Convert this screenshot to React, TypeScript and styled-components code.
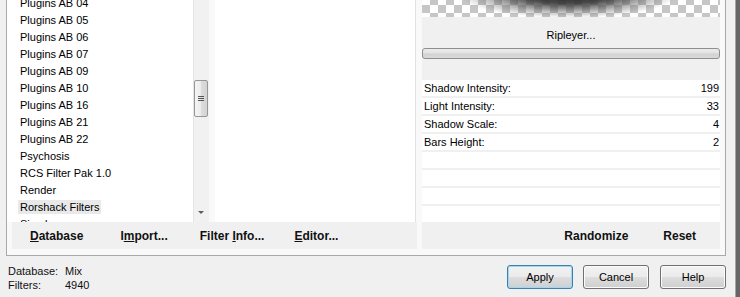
import React from "react";
import styled, { createGlobalStyle } from "styled-components";

const Global = createGlobalStyle`
  html, body { margin: 0; padding: 0; background: #f0f0f0; }
  body {
    font-family: "Liberation Sans", Arial, sans-serif;
    font-size: 11px;
    color: #000;
    overflow: hidden;
  }
`;

const Screen = styled.div`
  display: flex;
  width: 740px;
  height: 297px;
  overflow: hidden;
`;

const Main = styled.div`
  width: 735px;
  display: flex;
  flex-direction: column;
`;

const Edge = styled.div`
  width: 5px;
  box-sizing: border-box;
  background: #666666;
  border-left: 1px solid #a4a4a4;
`;

const Frame = styled.div`
  margin-left: 6px;
  width: 720px;
  height: 256px;
  box-sizing: border-box;
  border: 1px solid #a9a9a9;
  border-top: none;
  background: #f9f9f9;
  display: flex;
  gap: 5px;
`;

const LeftCol = styled.div`
  width: 410px;
  display: flex;
  flex-direction: column;
`;

const TopRow = styled.div`
  height: 222px;
  display: flex;
  gap: 6px;
`;

const List = styled.div`
  width: 202px;
  display: flex;
  background: #fff;
`;

const ListItems = styled.div`
  flex: 1;
  overflow: hidden;
`;

const ListScroll = styled.div`
  margin-top: -5px;
`;

const Item = styled.div`
  height: 17px;
  line-height: 17px;
  padding-left: 11px;
  white-space: nowrap;
`;

const ItemText = styled.span<{ $selected?: boolean }>`
  display: inline-block;
  line-height: 14px;
  padding: 0 2px;
  background: ${(p) => (p.$selected ? "#e9e9e9" : "transparent")};
`;

const Scrollbar = styled.div`
  width: 16px;
  position: relative;
  background: #f1f1f1;
  border-left: 1px solid #e4e4e4;
  box-sizing: border-box;
`;

const Thumb = styled.div`
  position: absolute;
  left: 0;
  width: 14px;
  top: 80px;
  height: 37px;
  box-sizing: border-box;
  border: 1px solid #979797;
  border-radius: 2px;
  background: linear-gradient(90deg, #f4f4f4 0%, #ececec 50%, #dcdcdc 51%, #d4d4d4 100%);
  display: flex;
  align-items: center;
  justify-content: center;
`;

const Arrow = styled.div`
  position: absolute;
  left: 4px;
  top: 211px;
  width: 0;
  height: 0;
  border-left: 3px solid transparent;
  border-right: 3px solid transparent;
  border-top: 3px solid #5c5c5c;
`;

const Middle = styled.div`
  flex: 1;
  margin-right: 1px;
  background: #fff;
  border-right: 1px solid #e2e2e2;
`;

const Bar = styled.div<{ $align: "start" | "end" }>`
  height: 27px;
  background: #f0f0f0;
  display: flex;
  align-items: center;
  justify-content: ${(p) => (p.$align === "end" ? "flex-end" : "flex-start")};
  gap: ${(p) => (p.$align === "end" ? "35px" : "0")};
  padding: ${(p) => (p.$align === "end" ? "0 24px 0 0" : "0 0 0 18px")};
  margin-left: ${(p) => (p.$align === "end" ? "0" : "5px")};
`;

const BarButton = styled.span<{ $gap?: number }>`
  font-size: 12px;
  font-weight: bold;
  color: #111;
  white-space: nowrap;
  margin-left: ${(p) => p.$gap ?? 0}px;
`;

const RightCol = styled.div`
  width: 298px;
  display: flex;
  flex-direction: column;
`;

const Preview = styled.div`
  height: 17px;
  background-color: #fff;
  background-image:
    radial-gradient(ellipse 110px 24px at 146px -6px, rgba(35, 35, 35, 1) 0%, rgba(55, 55, 55, 0.9) 40%, rgba(110, 110, 110, 0.45) 75%, rgba(150, 150, 150, 0) 100%),
    linear-gradient(45deg, #c6c6c6 25%, transparent 25%, transparent 75%, #c6c6c6 75%),
    linear-gradient(45deg, #c6c6c6 25%, transparent 25%, transparent 75%, #c6c6c6 75%);
  background-size: 100% 100%, 16px 16px, 16px 16px;
  background-position: 0 0, 0 -3px, 8px 5px;
  background-repeat: no-repeat, repeat, repeat;
`;

const Info = styled.div`
  height: 63px;
  background: #f0f0f0;
  display: flex;
  flex-direction: column;
  align-items: center;
`;

const InfoTitle = styled.div`
  margin-top: 11px;
  line-height: 14px;
  font-size: 11px;
`;

const Progress = styled.div`
  margin-top: 6px;
  width: 100%;
  height: 11px;
  box-sizing: border-box;
  border: 1px solid #8e8e8e;
  border-radius: 3px;
  background: linear-gradient(#ececec 0%, #e2e2e2 45%, #d2d2d2 55%, #dadada 100%);
`;

const Rows = styled.div`
  height: 142px;
  background: #f0f0f0;
  display: flex;
  flex-direction: column;
  gap: 2px;
`;

const Row = styled.div`
  height: 16px;
  background: #fff;
  display: flex;
  align-items: center;
  justify-content: space-between;
  padding: 0 1px 0 2px;
  white-space: nowrap;
`;

const Footer = styled.div`
  height: 41px;
  display: flex;
  justify-content: space-between;
  align-items: flex-start;
`;

const Stats = styled.div`
  margin: 8px 0 0 8px;
  display: grid;
  grid-template-columns: 57px auto;
  line-height: 14px;
  color: #111;
`;

const Buttons = styled.div`
  margin: 9px 9px 0 0;
  display: flex;
`;

const Button = styled.button<{ $default?: boolean; $gap?: number }>`
  width: 66px;
  height: 24px;
  box-sizing: border-box;
  margin-left: ${(p) => p.$gap ?? 0}px;
  font-family: "Liberation Sans", Arial, sans-serif;
  font-size: 11px;
  color: #000;
  border-radius: 3px;
  border: 1px solid ${(p) => (p.$default ? "#3c7fb1" : "#707070")};
  box-shadow: ${(p) => (p.$default ? "inset 0 0 0 1px #9fd7f5" : "inset 0 0 0 1px #fbfbfb")};
  background: linear-gradient(#f2f2f2 0%, #ebebeb 50%, #dddddd 51%, #cfcfcf 100%);
  padding: 0;
`;

const items = [
  "Plugins AB 04",
  "Plugins AB 05",
  "Plugins AB 06",
  "Plugins AB 07",
  "Plugins AB 09",
  "Plugins AB 10",
  "Plugins AB 16",
  "Plugins AB 21",
  "Plugins AB 22",
  "Psychosis",
  "RCS Filter Pak 1.0",
  "Render",
  "Rorshack Filters",
  "Simple",
];

const params: [string, number][] = [
  ["Shadow Intensity:", 199],
  ["Light Intensity:", 33],
  ["Shadow Scale:", 4],
  ["Bars Height:", 2],
];

export default function App() {
  return (
    <Screen>
      <Global />
      <Main>
        <Frame>
          <LeftCol>
            <TopRow>
              <List>
                <ListItems>
                  <ListScroll>
                    {items.map((it) => (
                      <Item key={it}>
                        <ItemText $selected={it === "Rorshack Filters"}>{it}</ItemText>
                      </Item>
                    ))}
                  </ListScroll>
                </ListItems>
                <Scrollbar>
                  <Thumb>
                    <svg width="6" height="6" viewBox="0 0 6 6">
                      <path d="M0 0.5H6M0 2.5H6M0 4.5H6" stroke="#555" strokeWidth="1" />
                    </svg>
                  </Thumb>
                  <Arrow />
                </Scrollbar>
              </List>
              <Middle />
            </TopRow>
            <Bar $align="start">
              <BarButton><u>D</u>atabase</BarButton>
              <BarButton $gap={37}>I<u>m</u>port...</BarButton>
              <BarButton $gap={32}>Filter <u>I</u>nfo...</BarButton>
              <BarButton $gap={30}><u>E</u>ditor...</BarButton>
            </Bar>
          </LeftCol>
          <RightCol>
            <Preview />
            <Info>
              <InfoTitle>Ripleyer...</InfoTitle>
              <Progress />
            </Info>
            <Rows>
              {params.map(([label, value]) => (
                <Row key={label}>
                  <span>{label}</span>
                  <span>{value}</span>
                </Row>
              ))}
              {[0, 1, 2, 3].map((i) => (
                <Row key={"empty" + i} />
              ))}
            </Rows>
            <Bar $align="end">
              <BarButton>Randomize</BarButton>
              <BarButton>Reset</BarButton>
            </Bar>
          </RightCol>
        </Frame>
        <Footer>
          <Stats>
            <span>Database:</span>
            <span>Mix</span>
            <span>Filters:</span>
            <span>4940</span>
          </Stats>
          <Buttons>
            <Button $default>Apply</Button>
            <Button $gap={10}>Cancel</Button>
            <Button $gap={11}>Help</Button>
          </Buttons>
        </Footer>
      </Main>
      <Edge />
    </Screen>
  );
}
